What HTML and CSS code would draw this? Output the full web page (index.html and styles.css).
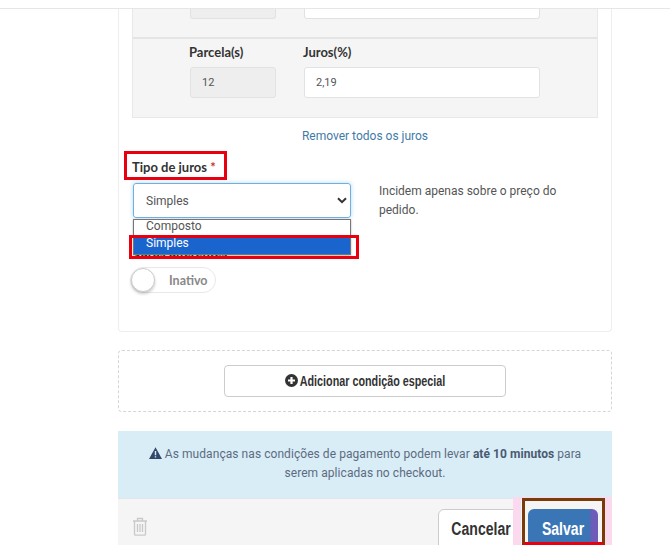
FILE: index.html
```html
<!DOCTYPE html>
<html lang="en">
<head>
    <meta charset="UTF-8">
    <meta name="viewport" content="width=device-width, initial-scale=1.0">
    <title>Condições de pagamento</title>
    <link rel="stylesheet" href="styles.css">
</head>
<body>
    <div class="topbar"></div>
    <div class="main">
        <div class="card">
            <div class="rates">
                <div class="rate-row rate-row-cut">
                    <div class="field-short"><div class="input input-off input-cut"></div></div>
                    <div class="field-long"><div class="input input-cut"></div></div>
                </div>
                <div class="rate-row">
                    <div class="field-short">
                        <div class="label">Parcela(s)</div>
                        <div class="input input-off">12</div>
                    </div>
                    <div class="field-long">
                        <div class="label">Juros(%)</div>
                        <div class="input">2,19</div>
                    </div>
                </div>
            </div>
            <div class="remove-link"><a href="#">Remover todos os juros</a></div>

            <div class="type-row">
                <div class="type-col">
                    <div class="label type-label">Tipo de juros <span class="req">*</span></div>
                    <div class="select">
                        <span>Simples</span>
                        <svg class="chevron" width="10" height="7" viewBox="0 0 10 7"><path d="M1 1.2l4 4 4-4" fill="none" stroke="#333" stroke-width="2"/></svg>
                    </div>
                    <div class="label hidden-label">Juros diferentes</div>
                    <div class="toggle">
                        <span class="knob"></span>
                        <span class="toggle-text">Inativo</span>
                    </div>
                    <div class="options">
                        <div class="option">Composto</div>
                        <div class="option option-on">Simples</div>
                    </div>
                </div>
                <p class="type-help">Incidem apenas sobre o preço do pedido.</p>
            </div>
        </div>

        <div class="add-box">
            <button class="add-btn">
                <svg width="13" height="13" viewBox="0 0 13 13"><circle cx="6.5" cy="6.5" r="6.5" fill="#333"/><path d="M6.500 3v7M3 6.500h7" stroke="#fff" stroke-width="2.2"/></svg>
                <span class="narrow add-text">Adicionar condição especial</span>
            </button>
        </div>

        <div class="notice">
            <svg class="warn" width="13" height="12" viewBox="0 0 13 12"><path d="M6.500 0.3L13 12H0z" fill="#31486b"/><path d="M6.500 4v4.200M6.500 9.200v1.400" stroke="#d9edf7" stroke-width="1.4"/></svg>
            As mudanças nas condições de pagamento podem levar <b>até 10 minutos</b> para serem aplicadas no checkout.
        </div>

        <div class="actions">
            <svg class="trash" width="16" height="19" viewBox="0 0 16 19" fill="none" stroke="#c9c9c9" stroke-width="1.3"><path d="M1 4h14M5.500 4V1.500h5V4M2.500 4v13.200c0 .6.4 1 1 1h9c.6 0 1-.4 1-1V4M5.500 7v8M8 7v8M10.500 7v8"/></svg>
            <div class="action-btns">
                <button class="btn-cancel"><span class="narrow">Cancelar</span></button>
                <button class="btn-save"><span class="narrow">Salvar</span></button>
            </div>
        </div>
    </div>

    <div class="mark mark-label"></div>
    <div class="mark mark-option"></div>
    <div class="save-glow"></div>
    <div class="mark-save"></div>
</body>
</html>
```

FILE: styles.css
```css
html, body {
    margin: 0;
    height: 545px;
    overflow: hidden;
    background: #fff;
}
body {
    position: relative;
    font-family: Roboto, sans-serif;
    font-size: 13px;
    color: #444;
}
.topbar {
    height: 8px;
    border-bottom: 1px solid #e6e6e6;
}
.main {
    width: 494px;
    margin-left: 118px;
}
.card {
    height: 322px;
    padding: 0 14px;
    border: 1px solid #eee;
    border-top: 0;
    border-radius: 0 0 4px 4px;
    box-sizing: content-box;
}
.rates {
    width: 466px;
    height: 109px;
    margin-left: -1px;
    box-sizing: border-box;
    background: #f5f5f5;
    border: 1px solid #e8e8e8;
    border-top: 0;
}
.rate-row {
    display: flex;
    padding: 5px 0 0 57px;
    gap: 28px;
}
.rate-row-cut {
    height: 30px;
    box-sizing: border-box;
    padding-top: 0;
    border-bottom: 2px solid #e4e4e4;
}
.rate-row .label {
    margin-left: -1px;
}
.field-short {
    width: 86px;
}
.field-long {
    width: 236px;
}
.label {
    font-family: Lato, sans-serif;
    font-weight: 700;
    font-size: 13px;
    line-height: 16px;
    color: #333;
}
.type-label {
    margin-left: -1px;
}
.input {
    box-sizing: border-box;
    height: 31px;
    margin-top: 7px;
    padding: 0 11px;
    line-height: 30px;
    font-size: 11px;
    color: #555;
    background: #fff;
    border: 1px solid #e2e2e2;
    border-radius: 3px;
}
.input-off {
    background: #eee;
}
.input-cut {
    height: 10px;
    margin-top: 0;
    border-top: 0;
    border-radius: 0 0 3px 3px;
}
.remove-link {
    margin-top: 10px;
    text-align: center;
    line-height: 16px;
    font-size: 12px;
}
.remove-link a {
    color: #3f7ba8;
    text-decoration: none;
}
.type-row {
    display: flex;
    margin-top: 15px;
}
.type-col {
    position: relative;
    width: 218px;
}
.req {
    color: #c9302c;
}
.select {
    display: flex;
    align-items: center;
    justify-content: space-between;
    box-sizing: border-box;
    height: 35px;
    margin-top: 8px;
    padding: 0 3px 0 12px;
    font-size: 12px;
    color: #555;
    border: 1px solid #6fb0e0;
    border-radius: 3px;
    box-shadow: 0 0 4px rgba(102, 175, 233, .5);
}
.hidden-label {
    margin-top: 26px;
    padding-left: 2px;
}
.toggle {
    display: flex;
    align-items: center;
    width: 86px;
    height: 26px;
    margin: 7px 0 0 -3px;
    box-sizing: border-box;
    border: 1px solid #e8e8e8;
    border-radius: 13px;
}
.knob {
    width: 24px;
    height: 24px;
    box-sizing: border-box;
    background: #fff;
    border: 1px solid #ccc;
    border-radius: 50%;
    box-shadow: 0 2px 3px rgba(0, 0, 0, .2);
}
.toggle-text {
    margin-left: 14px;
    font-family: Lato, sans-serif;
    font-weight: 700;
    font-size: 12.5px;
    color: #888;
}
.options {
    position: absolute;
    left: 0;
    right: 0;
    top: 60px;
    box-sizing: border-box;
    height: 36px;
    background: #fff;
    border: 1px solid #767676;
    box-shadow: 0 1px 2px rgba(0, 0, 0, .3);
}
.option {
    height: 16px;
    padding-left: 12px;
    font-size: 12px;
    line-height: 13px;
    color: #555;
}
.option-on {
    height: 18px;
    line-height: 14px;
    background: #1a64ce;
    color: #fff;
}
.type-help {
    width: 205px;
    margin: 23px 0 0 28px;
    font-size: 12px;
    line-height: 19px;
    color: #555;
}
.add-box {
    display: flex;
    align-items: center;
    justify-content: center;
    box-sizing: border-box;
    height: 62px;
    margin-top: 18px;
    border: 1px dashed #d5d5d5;
    border-radius: 4px;
}
.add-btn {
    display: flex;
    align-items: center;
    justify-content: center;
    gap: 2px;
    width: 282px;
    height: 32px;
    padding: 0 0 1px;
    color: #333;
    background: #fff;
    border: 1px solid #ccc;
    border-radius: 4px;
}
/* no condensed face installed, so squeeze the bold sans */
.narrow {
    display: inline-block;
    font-family: "Liberation Sans", sans-serif;
    font-weight: 700;
    transform: scaleX(.78);
}
.add-text {
    margin: 0 -22px;
    font-size: 14px;
    transform: scaleX(.77);
}
.notice {
    box-sizing: border-box;
    height: 67px;
    margin-top: 19px;
    padding: 14px 20px;
    text-align: center;
    font-size: 12px;
    letter-spacing: .06px;
    line-height: 19px;
    color: #5c6b80;
    background: #d9edf7;
}
.notice b {
    color: #4a5a72;
}
.warn {
    vertical-align: -1px;
}
.actions {
    display: flex;
    align-items: flex-start;
    justify-content: space-between;
    box-sizing: border-box;
    height: 60px;
    padding: 10px 14px 0;
    background: #f5f5f5;
    border-top: 1px solid #e4e4ee;
}
.trash {
    margin-top: 8px;
}
.action-btns {
    display: flex;
    gap: 8px;
}
.action-btns button {
    height: 50px;
    padding: 0 0 10px;
    font-size: 18px;
    border-radius: 6px;
}
.btn-cancel {
    width: 82px;
    padding-left: 4px !important;
    color: #333;
    background: #fff;
    border: 1px solid #ccc;
}
.btn-save {
    width: 70px;
    color: #fff;
    background: linear-gradient(to right, #3a75b5 86%, #6d5cb8 92%);
    border: 0;
}
.mark {
    position: absolute;
    box-sizing: border-box;
    border: 3px solid #e8000f;
}
.mark-label {
    left: 124px;
    top: 151px;
    width: 103px;
    height: 29px;
}
.mark-option {
    left: 129px;
    top: 235px;
    width: 230px;
    height: 24px;
}
.save-glow {
    position: absolute;
    left: 513px;
    top: 497px;
    width: 99px;
    height: 48px;
    box-sizing: border-box;
    border: solid #fbd9ee;
    border-width: 2px 8px 0;
}
.mark-save {
    position: absolute;
    box-sizing: border-box;
    left: 522px;
    top: 498px;
    width: 83px;
    height: 47px;
    border: 3px solid #7a3b08;
    border-bottom-color: #e8000f;
}
```
